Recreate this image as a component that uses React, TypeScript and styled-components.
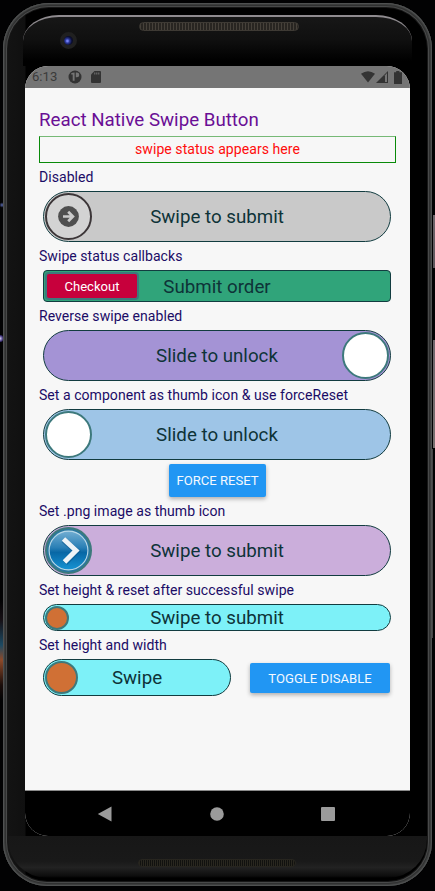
import React from 'react';
import styled, { createGlobalStyle } from 'styled-components';

const GlobalStyle = createGlobalStyle`
  * { box-sizing: border-box; }
  body { margin: 0; background: #020203; overflow: hidden; }
`;

const Desktop = styled.main`
  width: 435px;
  height: 891px;
  padding: 3px 0 0 3px;
  display: flex;
  font-family: Roboto, 'Liberation Sans', sans-serif;
  background:
    linear-gradient(#6e666b, #5d565b) 433px 215px / 2px 53px no-repeat,
    linear-gradient(#6e666b, #77706f) 433px 340px / 2px 108px no-repeat,
    linear-gradient(#444, #444) 432px 449px / 1px 189px no-repeat,
    radial-gradient(circle at 0 50%, #d9d4ff, #3a2d70 55%, transparent 75%) 0 334px / 3px 9px no-repeat,
    radial-gradient(circle at 50% 50%, #5a6ab0, transparent 75%) 0 202px / 4px 6px no-repeat,
    linear-gradient(#020203, #161015 20%, #1c4a63 45%, #8d4a2a 60%, #1a0d0a 85%, #020203) 0 600px / 4px 100px no-repeat,
    #020203;
`;

const Phone = styled.div`
  width: 429px;
  height: 883px;
  display: flex;
  flex-direction: column;
  padding: 0 22px;
  border-radius: 46px 46px 44px 44px;
  background: linear-gradient(90deg, #141414 0, #101010 22px, #000 23px, #000 100%);
  box-shadow:
    inset 0 0 0 1px #4f5151,
    inset 0 0 0 2px #3c3d3d,
    inset 0 0 0 3px #303131,
    inset 0 0 0 4px #484949,
    inset 0 0 0 5px #171717;
`;

const TopBezel = styled.div`
  height: 63px;
  margin: 0 -5px;
  padding-top: 12px;
  flex: none;
`;

const Glass = styled.div`
  height: 51px;
  margin: 0 3px;
  border-top: 2px solid #8f8b8f;
  border-radius: 36px 36px 0 0 / 26px 26px 0 0;
  background: linear-gradient(#171717, #101010 45%, #000 90%);
  display: grid;
  grid-template-columns: 36px 24px 36px 160px;
  align-items: start;
`;

const Camera = styled.div`
  grid-column: 2;
  width: 17px;
  height: 17px;
  margin: 15px 0 0 1px;
  border-radius: 50%;
  border: 4px solid #202020;
  background: radial-gradient(circle at 38% 55%, #7481f5 0 10%, #2d3a9e 28%, #0c1033 58%, #060612);
`;

const Grille = styled.div<{ $dim?: boolean }>`
  height: ${p => (p.$dim ? 8 : 9)}px;
  border-radius: 5px;
  border: 1px solid ${p => (p.$dim ? '#27251f' : '#3e3a34')};
  background: repeating-linear-gradient(90deg,
    ${p => (p.$dim ? '#29271f 0 1px, #11110f 1px 2px' : '#46413a 0 1px, #282521 1px 3px')});
`;

const EarGrille = styled(Grille)`
  grid-column: 4;
  margin-top: 5px;
  margin-left: 20px;
  width: 160px;
`;

const BottomBezel = styled.div`
  height: 42px;
  margin: 0 -17px;
  padding: 23px 0 0 130px;
  flex: none;
  border-radius: 0 0 39px 39px;
  background: linear-gradient(#171717, #191919 60%, #222 75%, #0d0d0d 95%, #000);
`;

const ChinGrille = styled(Grille)`
  width: 158px;
`;

const Screen = styled.div`
  width: 385px;
  height: 770px;
  flex: none;
  display: flex;
  flex-direction: column;
  border-radius: 23px;
  overflow: hidden;
  background: #f7f7f7;
`;

const StatusBar = styled.div`
  height: 22px;
  flex: none;
  display: flex;
  align-items: center;
  padding: 0 8px 0 7px;
  background: #757575;
  color: #3b3b3b;
`;

const Clock = styled.span`
  width: 36px;
  font-size: 13.1px;
  letter-spacing: 0;
  line-height: 22px;
`;

const StatusIcons = styled.div<{ $end?: boolean }>`
  display: flex;
  align-items: center;
  gap: ${p => (p.$end ? 1 : 9)}px;
  margin-left: ${p => (p.$end ? 'auto' : 0)};
  svg { display: block; }
`;

const Page = styled.div`
  height: 703px;
  flex: none;
  padding: 19px 14px 0;
  border-bottom: 1px solid #8a8a8a;
`;

const Title = styled.h1`
  margin: 0 0 3px;
  height: 26px;
  font-size: 18.73px;
  font-weight: 400;
  line-height: 27px;
  color: #6a0f95;
  white-space: nowrap;
`;

const StatusBox = styled.div`
  height: 27px;
  width: 357px;
  border: 1px solid #098a09;
  border-top-color: #76b976;
  line-height: 24px;
  font-size: 14.05px;
  letter-spacing: 0.04px;
  text-align: center;
  color: #ff0d0d;
`;

const Label = styled.div`
  height: 28px;
  line-height: 28px;
  font-size: 14.05px;
  letter-spacing: 0.03px;
  color: #1b0c66;
  white-space: nowrap;
`;

const Track = styled.div<{ $bg: string; $h: number; $w?: number; $r?: number; $reverse?: boolean }>`
  position: relative;
  display: flex;
  align-items: center;
  justify-content: ${p => (p.$reverse ? 'flex-end' : 'flex-start')};
  flex: none;
  width: ${p => p.$w ?? 348}px;
  height: ${p => p.$h}px;
  margin-left: 4px;
  padding: 0 1px;
  border: 1px solid #123c40;
  border-radius: ${p => p.$r ?? p.$h / 2}px;
  background: ${p => p.$bg};
`;

const TrackTitle = styled.span`
  position: absolute;
  inset: 0;
  display: flex;
  align-items: center;
  justify-content: center;
  padding-top: 1px;
  font-size: 18.73px;
  color: #0e3338;
  white-space: nowrap;
`;

const Thumb = styled.div<{ $size: number; $bg: string; $rim?: string }>`
  position: relative;
  width: ${p => p.$size}px;
  height: ${p => p.$size}px;
  display: flex;
  align-items: center;
  justify-content: center;
  border: 2px solid ${p => p.$rim ?? '#3d797c'};
  border-radius: 50%;
  background: ${p => p.$bg};
  svg { display: block; flex: none; }
`;

const TextThumb = styled.div`
  position: relative;
  width: 94px;
  height: 28px;
  border: 2px solid #3d797c;
  border-radius: 4px;
  background: #c7003c;
  color: #fff;
  font-size: 13.1px;
  line-height: 25px;
  text-align: center;
`;

const ActionButton = styled.button<{ $w: number; $h: number; $drop?: number }>`
  width: ${p => p.$w}px;
  height: ${p => p.$h}px;
  padding: ${p => p.$drop ?? 0}px 0 0;
  border: 0;
  border-radius: 2px;
  background: #2196f3;
  color: #f4f9ff;
  font-family: inherit;
  font-size: 13.1px;
  white-space: nowrap;
  box-shadow: 0 2px 4px rgba(0, 0, 0, 0.3);
`;

const CenterRow = styled.div`
  display: flex;
  justify-content: center;
  padding-top: 4px;
`;

const SplitRow = styled.div`
  display: flex;
  align-items: center;
  gap: 19px;
`;

const NavBar = styled.nav`
  height: 45px;
  flex: none;
  display: flex;
  justify-content: space-between;
  align-items: center;
  padding: 0 75px 0 72px;
  background: #000;
  svg { display: block; }
`;

const NotificationIcon = () => (
  <svg width="14" height="14" viewBox="0 0 14 14">
    <circle cx="7" cy="7" r="6.5" fill="#333" />
    <path d="M3.2 3.2Q4.5 2.4 6.6 2.4V10.8H4.7V4.4H3.2zM7.8 2.5h1.1a2.4 2.4 0 0 1 0 4.8H7.8z" fill="#757575" />
  </svg>
);

const SdIcon = () => (
  <svg width="10" height="12" viewBox="0 0 10 12">
    <path d="M3.5 0H9a1 1 0 0 1 1 1v10a1 1 0 0 1-1 1H1a1 1 0 0 1-1-1V3.5z" fill="#333" />
    <path d="M3.8 1.5v2M5.8 1.5v2M7.8 1.5v2" stroke="#757575" />
  </svg>
);

const WifiIcon = () => (
  <svg width="14" height="12" viewBox="0 0 14 12">
    <path d="M0 2.8Q7-2.5 14 2.8L7 11.5z" fill="#333" />
  </svg>
);

const SignalIcon = () => (
  <svg width="13" height="12" viewBox="0 0 13 12">
    <path d="M12 0v12H0z" fill="#333" />
    <path d="M9 4.2L11 2v9H9z" fill="#757575" />
  </svg>
);

const BatteryIcon = () => (
  <svg width="8" height="13" viewBox="0 0 8 13">
    <path d="M2.2 0h3.2v1.2H8V13H0V1.2h2.2z" fill="#333" />
  </svg>
);

const ArrowCircle = () => (
  <svg width="21" height="21" viewBox="0 0 21 21">
    <circle cx="10.5" cy="10.5" r="10.4" fill="#4f4f4f" />
    <path d="M5 10.5h9M10.2 5.8l4.7 4.7-4.7 4.7" fill="none" stroke="#cbcbcb" strokeWidth="2.7" />
  </svg>
);

const ChevronBadge = () => (
  <svg width="43" height="43" viewBox="0 0 43 43">
    <defs>
      <linearGradient id="badge" x1="0" y1="0" x2="0" y2="1">
        <stop offset="0" stopColor="#72aed2" />
        <stop offset="0.42" stopColor="#2b80b6" />
        <stop offset="0.55" stopColor="#0867a5" />
        <stop offset="1" stopColor="#1794d4" />
      </linearGradient>
    </defs>
    <circle cx="21.5" cy="21.5" r="21" fill="#2a789f" />
    <circle cx="21.5" cy="21.5" r="19.4" fill="url(#badge)" stroke="#b9d8e8" strokeWidth="1.1" />
    <path d="M16.5 11L29.5 22.2 18 34" fill="none" stroke="#075487" strokeOpacity=".5" strokeWidth="6" />
    <path d="M16.5 10L29 21.5 17.5 33" fill="none" stroke="#eef4f7" strokeWidth="5" />
  </svg>
);

export default function App() {
  return (
    <>
      <GlobalStyle />
      <Desktop>
        <Phone>
          <TopBezel>
            <Glass>
              <Camera />
              <EarGrille />
            </Glass>
          </TopBezel>
          <Screen>
            <StatusBar>
              <Clock>6:13</Clock>
              <StatusIcons>
                <NotificationIcon />
                <SdIcon />
              </StatusIcons>
              <StatusIcons $end>
                <WifiIcon />
                <SignalIcon />
                <span />
                <span />
                <span />
                <span />
                <BatteryIcon />
              </StatusIcons>
            </StatusBar>
            <Page>
              <Title>React Native Swipe Button</Title>
              <StatusBox>swipe status appears here</StatusBox>
              <Label>Disabled</Label>
              <Track $bg="#c9c9c9" $h={51}>
                <TrackTitle>Swipe to submit</TrackTitle>
                <Thumb $size={47} $bg="#d3d3d3" $rim="#3c3638"><ArrowCircle /></Thumb>
              </Track>
              <Label>Swipe status callbacks</Label>
              <Track $bg="#30a47a" $h={32} $r={4}>
                <TrackTitle>Submit order</TrackTitle>
                <TextThumb>Checkout</TextThumb>
              </Track>
              <Label>Reverse swipe enabled</Label>
              <Track $bg="#a493d5" $h={51} $reverse>
                <TrackTitle>Slide to unlock</TrackTitle>
                <Thumb $size={47} $bg="#fff" />
              </Track>
              <Label>Set a component as thumb icon &amp; use forceReset</Label>
              <Track $bg="#9ec5e7" $h={51}>
                <TrackTitle>Slide to unlock</TrackTitle>
                <Thumb $size={47} $bg="#fff" />
              </Track>
              <CenterRow>
                <ActionButton $w={97} $h={33}>FORCE RESET</ActionButton>
              </CenterRow>
              <Label>Set .png image as thumb icon</Label>
              <Track $bg="#cbaedb" $h={51}>
                <TrackTitle>Swipe to submit</TrackTitle>
                <Thumb $size={47} $bg="#2a789f"><ChevronBadge /></Thumb>
              </Track>
              <Label>Set height &amp; reset after successful swipe</Label>
              <Track $bg="#7df1f8" $h={27}>
                <TrackTitle>Swipe to submit</TrackTitle>
                <Thumb $size={24} $bg="#d07035" />
              </Track>
              <Label>Set height and width</Label>
              <SplitRow>
                <Track $bg="#7df1f8" $h={37} $w={188}>
                  <TrackTitle>Swipe</TrackTitle>
                  <Thumb $size={33} $bg="#d07035" />
                </Track>
                <ActionButton $w={140} $h={30} $drop={2}>TOGGLE DISABLE</ActionButton>
              </SplitRow>
            </Page>
            <NavBar>
              <svg width="15" height="16" viewBox="0 0 15 16"><path d="M14.5 .5v15L.8 8z" fill="#9b9b9b" /></svg>
              <svg width="14" height="14" viewBox="0 0 14 14"><circle cx="7" cy="7" r="6.8" fill="#9b9b9b" /></svg>
              <svg width="14" height="14" viewBox="0 0 14 14"><rect width="14" height="14" rx="1" fill="#9b9b9b" /></svg>
            </NavBar>
          </Screen>
          <BottomBezel>
            <ChinGrille $dim />
          </BottomBezel>
        </Phone>
      </Desktop>
    </>
  );
}
